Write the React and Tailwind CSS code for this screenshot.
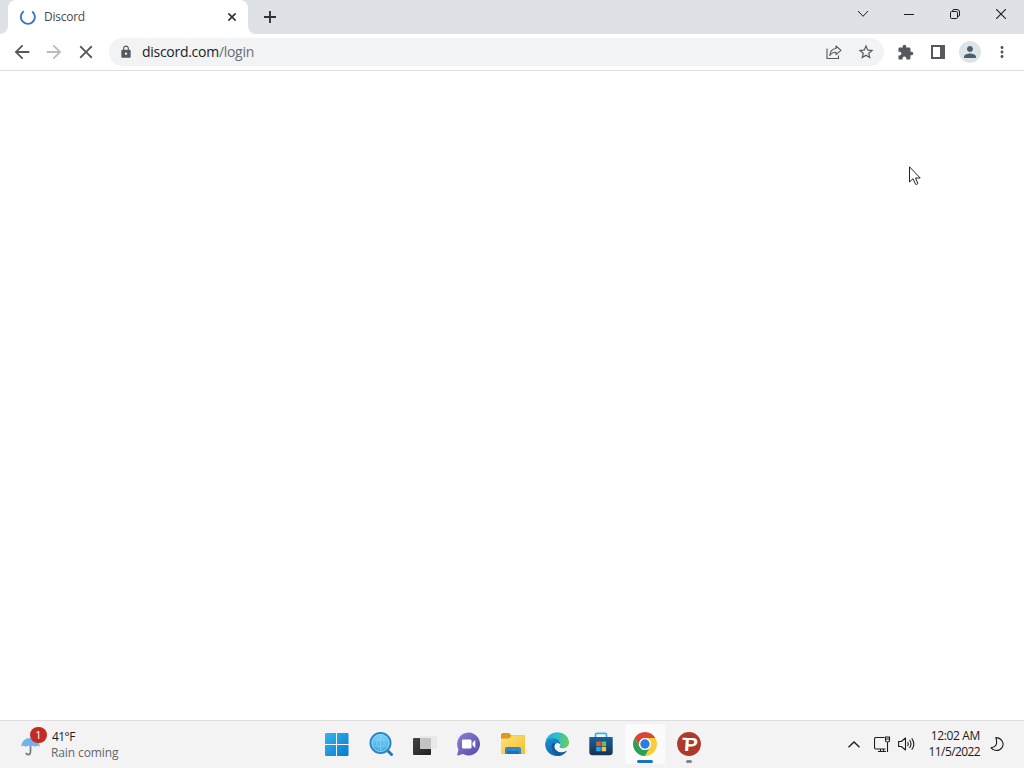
import React from "react";
import {
  MdArrowBack,
  MdArrowForward,
  MdClose,
  MdExtension,
  MdLock,
  MdMoreVert,
  MdPerson,
  MdStarBorder,
} from "react-icons/md";

const TabStrip = () => {
  return (
    <div className="flex h-[34px] bg-[#dee1e6] text-[#202124]">
      <svg width="8" height="34" viewBox="0 0 8 34" className="shrink-0">
        <path d="M8 26v8H0a8 8 0 0 0 8-8z" fill="#fff" />
      </svg>
      <div className="flex h-[34px] w-[240px] items-center rounded-t-lg bg-white pl-3 pr-3">
        <svg width="16" height="16" viewBox="0 0 16 16" fill="none">
          <path d="M3.800 2.200A7 7 0 1 0 12.200 2.400" stroke="#3b74c9" strokeWidth="1.900" />
        </svg>
        <span className="ml-2 w-[41px] whitespace-nowrap text-[12px] leading-4 tracking-[-0.25px] text-[#45494d]">
          Discord
        </span>
        <button className="ml-auto">
          <svg className="block" width="8" height="8" viewBox="0 0 8 8">
            <path d="M.4.400l7.200 7.200M7.600.400L.4 7.600" stroke="#303236" strokeWidth="1.600" />
          </svg>
        </button>
      </div>
      <svg width="8" height="34" viewBox="0 0 8 34" className="shrink-0">
        <path d="M0 26v8h8a8 8 0 0 1-8-8z" fill="#fff" />
      </svg>
      <button className="flex w-7 items-center justify-center">
        <svg width="12" height="12" viewBox="0 0 12 12">
          <path d="M6 0v12M0 6h12" stroke="#303236" strokeWidth="1.900" />
        </svg>
      </button>
      <div className="ml-auto flex h-7 text-[#1b1c1e]">
        <button className="flex w-[46px] items-center justify-center">
          <svg width="12" height="8" viewBox="0 0 12 8" fill="none">
            <path d="M1 1l5 5.300L11 1" stroke="currentColor" />
          </svg>
        </button>
        <button className="flex w-[46px] items-center justify-center pt-px">
          <svg width="10" height="1" viewBox="0 0 10 1">
            <path d="M0 0h10v1H0z" fill="currentColor" />
          </svg>
        </button>
        <button className="flex w-[46px] items-center justify-center">
          <svg width="10" height="10" viewBox="0 0 10 10" fill="none" stroke="currentColor">
            <rect x="0.5" y="2.5" width="7" height="7" rx="1.2" />
            <path d="M2.500 2V1.800Q2.700.5 4 .5h3Q9.500.5 9.500 3v3q0 1.300-1.500 1.500" />
          </svg>
        </button>
        <button className="flex w-[46px] items-center justify-center">
          <svg width="10" height="10" viewBox="0 0 10 10" fill="none">
            <path d="M0 0l10 10M10 0L0 10" stroke="currentColor" strokeWidth="1.100" />
          </svg>
        </button>
      </div>
    </div>
  );
};

const Toolbar = () => {
  return (
    <div className="flex h-[37px] items-center border-b border-[#dcdedf] bg-white pl-1.5 pr-1.5 text-[#55585c]">
      <button className="flex w-8 justify-center">
        <MdArrowBack size={22} />
      </button>
      <button className="flex w-8 justify-center text-[#b9bbbe]">
        <MdArrowForward size={22} />
      </button>
      <button className="flex w-8 justify-center">
        <MdClose size={22} />
      </button>
      <div className="ml-[7px] mr-1.5 flex h-7 grow items-center rounded-full bg-[#f1f3f4] pl-2.5 pr-0.5">
        <MdLock size={14} className="-mt-px" />
        <p className="ml-[9px] whitespace-nowrap text-[14px] leading-5 tracking-[-0.28px] text-[#6a6e73]">
          <span className="text-[#202124]">discord.com</span>/login
        </p>
        <button className="ml-auto flex w-8 justify-center">
          <svg width="16" height="16" viewBox="0 0 16 16" fill="none" stroke="currentColor" strokeWidth="1.100">
            <path d="M1 4.500v10h11.500v-3" />
            <path d="M10 2l5 4.400-5 4.200V8.200C7.300 8 5.200 9.200 3.800 11.500 4 7.500 6.200 4.900 10 4.500z" strokeLinejoin="round" />
          </svg>
        </button>
        <button className="flex w-8 justify-center">
          <MdStarBorder size={18} />
        </button>
      </div>
      <button className="flex w-8 justify-center pr-px">
        <MdExtension size={17} />
      </button>
      <button className="flex w-8 justify-center">
        <svg width="14" height="14" viewBox="0 0 14 14">
          <path d="M0 0h14v14H0zM2 2v10h7V2z" fill="currentColor" fillRule="evenodd" />
        </svg>
      </button>
      <button className="flex w-8 justify-center">
        <span className="flex h-[22px] w-[22px] items-center justify-center rounded-full bg-[#dfe4e8] text-[#4b5f6c]">
          <MdPerson size={18} />
        </span>
      </button>
      <button className="flex w-8 justify-center">
        <MdMoreVert size={18} />
      </button>
    </div>
  );
};

const Cursor = () => (
  <svg className="absolute left-[909px] top-[166px]" width="12" height="20" viewBox="0 0 12 20">
    <path
      d="M.5.800v15.200l3.500-3.300 2.600 5.600q1.200.6 2.300-.8L6.500 12h4.700z"
      fill="#fff"
      stroke="#222"
      strokeLinejoin="round"
    />
  </svg>
);

const StartIcon = () => (
  <svg width="24" height="24" viewBox="0 0 24 24">
    <defs>
      <linearGradient id="start" x1="0" y1="0" x2="1" y2="1" gradientUnits="objectBoundingBox">
        <stop stopColor="#33b5ee" />
        <stop offset="1" stopColor="#0879cf" />
      </linearGradient>
    </defs>
    <path
      d="M1 1h10v11H0V2q0-1 1-1zM12 1h10.500q1 0 1 1v10H12zM0 13h11v11H1q-1 0-1-1zM12 13h11.500v10q0 1-1 1H12z"
      fill="url(#start)"
    />
  </svg>
);

const SearchIcon = () => (
  <svg width="24" height="24" viewBox="0 0 24 24" fill="none">
    <defs>
      <linearGradient id="lens" x2="0" y2="1">
        <stop stopColor="#7fd5f7" />
        <stop offset="1" stopColor="#36a5e4" />
      </linearGradient>
    </defs>
    <path d="M18 18l4.500 4.500" stroke="#287bb5" strokeWidth="3" strokeLinecap="round" />
    <circle cx="11.500" cy="11" r="10" fill="url(#lens)" stroke="#2c86c2" strokeWidth="2" />
    <circle cx="11.500" cy="11" r="8.500" stroke="#8bdcfa" strokeWidth="1" />
    <path
      d="M5 8h13M5 14h13M11.500 4v14M11.500 4c-5 4.500-5 9.500 0 14M11.500 4c5 4.500 5 9.500 0 14"
      stroke="#86d3f5"
      strokeWidth="0.700"
    />
  </svg>
);

const TaskViewIcon = () => (
  <svg width="24" height="24" viewBox="0 0 24 24">
    <defs>
      <linearGradient id="taskview" x2="1" y2="1">
        <stop stopColor="#444" />
        <stop offset="1" stopColor="#202020" />
      </linearGradient>
    </defs>
    <rect x="0" y="6" width="18" height="17" rx="1" fill="url(#taskview)" />
    <rect x="7" y="4" width="17" height="13" rx="1" fill="#e9e9e9" />
    <path d="M7 6h11v11H8q-1 0-1-1z" fill="#c3c3c3" />
  </svg>
);

const ChatIcon = () => (
  <svg width="24" height="24" viewBox="0 0 24 24">
    <defs>
      <linearGradient id="chat" x2="1" y2="1">
        <stop stopColor="#8c82cf" />
        <stop offset="1" stopColor="#5548ad" />
      </linearGradient>
    </defs>
    <path d="M11.500.5a11.500 11.500 0 1 1-5.500 21.600L.8 23.500q-.8.1-.6-.8L1.500 17.500A11.500 11.500 0 0 1 11.500.5z" fill="url(#chat)" />
    <rect x="5" y="7.500" width="9.500" height="9" rx="1.300" fill="#fff" />
    <path d="M15.500 10.800l2.800-2.800v8l-2.800-2.800z" fill="#fff" />
  </svg>
);

const FolderIcon = () => (
  <svg width="26" height="24" viewBox="0 0 26 24">
    <defs>
      <linearGradient id="folder" x2="1" y2="1">
        <stop stopColor="#ffe27a" />
        <stop offset="1" stopColor="#f4bd29" />
      </linearGradient>
    </defs>
    <path d="M1 3q0-2 2-2h6l2.500 2.500H24q1 0 1 1V10H1z" fill="#d99b17" />
    <path d="M1 6.500h8L11.500 4H24q1 0 1 1v16q0 1-1 1H2q-1 0-1-1z" fill="url(#folder)" />
    <path d="M5 17q0-2 2-2h12q2 0 2 2v5H5z" fill="#2f86cc" />
    <path d="M7 19h12v3H7z" fill="#1d71b5" />
  </svg>
);

const EdgeIcon = () => (
  <svg width="24" height="24" viewBox="0 0 24 24">
    <defs>
      <linearGradient id="edgeTop" x1="0" y1=".3" x2="1" y2=".4">
        <stop stopColor="#2aa9df" />
        <stop offset=".5" stopColor="#2fbdc9" />
        <stop offset="1" stopColor="#68cf59" />
      </linearGradient>
      <linearGradient id="edgeLeft" x1="0" y1="0" x2=".5" y2="1">
        <stop stopColor="#1c91d2" />
        <stop offset="1" stopColor="#1464ae" />
      </linearGradient>
    </defs>
    <path d="M.3 11A11.800 11.800 0 0 1 12 .2C19 .2 24 5 24 10.300c0 4-3 6.200-6.200 6.200-2.500 0-4-.9-3.400-1.800 2.500-3-.2-6.600-4.400-6.600C5 8.100 1 10 .3 11z" fill="url(#edgeTop)" />
    <path d="M.2 11.500C1.200 7.700 5 6 8.700 6.300c4.500.3 7.200 3.800 6.400 6.700-.9-2-3.600-2.300-4.900-.5-2.300 3.300 1.300 8 6.300 7.700 2.700 0 4.400-1.300 5.300-1.500C19.500 22.200 16.200 24 12 24 5 24-.2 18.300.2 11.500z" fill="url(#edgeLeft)" />
    <path d="M8.700 10.300c-4.600 4.300-1.200 13 5.500 13.500 3.500-.4 6.300-2.600 7.600-5.100-1 .2-2.500 1.500-5.300 1.500-5 0-8.700-4.900-6.300-7.700z" fill="#145ba2" />
    <path d="M10.200 12.500c1.300-1.800 4-1.500 4.900.5.300 1.200-1.200 1.700-.7 2.300.9 1.700 5.200 1.500 8.200-.5l-.8 3.900c-1 .2-2.600 1.500-5.300 1.500-5 0-8.300-4.900-6.300-7.700z" fill="#f3f3f3" />
  </svg>
);

const StoreIcon = () => (
  <svg width="24" height="24" viewBox="0 0 24 24">
    <defs>
      <linearGradient id="store" x2="0" y2="1">
        <stop stopColor="#17639d" />
        <stop offset="1" stopColor="#183253" />
      </linearGradient>
    </defs>
    <path d="M6.500 6V3q0-1.700 1.700-1.700h7.600q1.700 0 1.700 1.700v3" fill="none" stroke="#3bb6e1" strokeWidth="1.700" />
    <path d="M1 5h22q.7 0 .7.700V20q0 3.300-3.300 3.300H3.600Q.3 23.300.3 20V5.700Q.3 5 1 5z" fill="url(#store)" />
    <path d="M7.200 9.500h4.500V14H7.200z" fill="#e65933" />
    <path d="M12.600 9.500h4.500V14h-4.500z" fill="#84b83b" />
    <path d="M7.200 14.800h4.500v4.500H7.200z" fill="#29a7df" />
    <path d="M12.600 14.800h4.500v4.500h-4.500z" fill="#f3c33a" />
  </svg>
);

const ChromeIcon = () => (
  <svg width="24" height="24" viewBox="0 0 24 24">
    <path d="M1.610 6A12 12 0 0 1 22.390 6H12a6 6 0 0 0-5.200 9z" fill="#dc4436" />
    <path d="M22.390 6A12 12 0 0 1 12 24l5.200-9A6 6 0 0 0 12 6z" fill="#fbcd35" />
    <path d="M12 24A12 12 0 0 1 1.610 6l5.190 9a6 6 0 0 0 10.400 0z" fill="#29a052" />
    <circle cx="12" cy="12" r="6" fill="#fff" />
    <circle cx="12" cy="12" r="4.700" fill="#2d7de0" />
  </svg>
);

const PsiphonIcon = () => (
  <svg width="24" height="24" viewBox="0 0 24 24">
    <circle cx="12" cy="12" r="11.900" fill="#ad392d" />
    <path d="M5.500 5.700h4v2.300h-4z" fill="#fff" />
    <text
      x="6"
      y="18.800"
      fill="#fff"
      fontSize="19"
      fontWeight="700"
      fontFamily="Liberation Sans, sans-serif"
      transform="translate(2 0) skewX(-4)"
      textLength="13.500"
      lengthAdjust="spacingAndGlyphs"
    >
      P
    </text>
  </svg>
);

const apps = [
  { name: "Start", Icon: StartIcon },
  { name: "Search", Icon: SearchIcon },
  { name: "Task View", Icon: TaskViewIcon },
  { name: "Chat", Icon: ChatIcon },
  { name: "File Explorer", Icon: FolderIcon },
  { name: "Microsoft Edge", Icon: EdgeIcon },
  { name: "Microsoft Store", Icon: StoreIcon },
  { name: "Google Chrome", Icon: ChromeIcon, active: true },
  { name: "Psiphon", Icon: PsiphonIcon, running: true },
];

const Weather = () => (
  <div className="flex w-[314px] items-center pl-5">
    <div className="relative h-[30px] w-[27px]">
      <svg className="ml-px mt-1" width="19" height="23" viewBox="0 0 20 23">
        <path d="M10 7v11q0 3-2.500 3-2 0-2-2" fill="none" stroke="#747a80" strokeWidth="1.800" />
        <path d="M0 13Q1 3.500 10 3.500T20 13q-2-2.500-5 0-2.500-2.300-5 0-2.500-2.300-5 0-3-2.500-5 0z" fill="#72b2ee" />
      </svg>
      <span className="absolute -top-[3px] left-2.5 flex h-4 w-[17px] items-center justify-center rounded-full bg-[#c42b20] text-[11px] leading-none text-white">
        1
      </span>
    </div>
    <div className="ml-[5px] text-[12px] leading-4">
      <p className="tracking-[-0.55px] text-[#202020]">41°F</p>
      <p className="-ml-px tracking-[-0.1px] text-[#666]">Rain coming</p>
    </div>
  </div>
);

const Tray = () => (
  <div className="ml-auto flex items-center pb-px text-[#1c1c1c]">
    <svg width="12" height="7" viewBox="0 0 12 7" fill="none">
      <path d="M.5 6.300L6 1l5.500 5.300" stroke="currentColor" strokeWidth="1.300" />
    </svg>
    <svg className="ml-3.5" width="17" height="17" viewBox="0 0 17 17" fill="none" stroke="currentColor" strokeWidth="1.100">
      <path d="M10.500 1.500H2q-1.500 0-1.500 1.500v8.500Q.5 13 2 13h9.500M4 15.500h8M6.500 13v2.500M9.500 13v2.500" />
      <path d="M11.500 1h4v3.500q0 1.500-2 1.500t-2-1.500zM11.500 3h4M13.500 6v10" />
    </svg>
    <svg className="ml-[7px]" width="17" height="16" viewBox="0 0 17 16" fill="none" stroke="currentColor" strokeWidth="1.100">
      <path d="M.6 5.500h2.700L7.500 2v12l-4.200-3.500H.6z" strokeLinejoin="round" />
      <path d="M9.500 6q1.600 2 0 4M11.500 4q3 4 0 8M13.700 2.300q4.300 5.700 0 11.400" />
    </svg>
    <div className="ml-3.5 whitespace-nowrap text-right text-[12px] leading-4">
      <p className="tracking-[-0.35px]">12:02 AM</p>
      <p className="tracking-[-0.6px]">11/5/2022</p>
    </div>
    <svg className="ml-2.5 mr-5" width="14" height="14" viewBox="0 0 14 14" fill="none">
      <path d="M5.800.6c6 .4 9 5.800 6.200 10C9.300 14.500 3.500 14.200 1 10.900c4.800-.6 7-4 4.800-10.300z" stroke="currentColor" strokeWidth="1.100" strokeLinejoin="round" />
    </svg>
  </div>
);

const Taskbar = () => {
  return (
    <div className="flex h-12 border-t border-[#dedede] bg-[#f3f3f3]">
      <Weather />
      <div className="flex items-center gap-1 pb-px pl-[3px]">
        {apps.map(({ name, Icon, active, running }) => (
          <button
            key={name}
            aria-label={name}
            className={`relative flex h-10 w-10 items-center justify-center rounded ${active ? "bg-[#fbfbfb]" : ""}`}
          >
            <Icon />
            {active && <span className="absolute bottom-px h-[3px] w-4 rounded-full bg-[#1976ba]" />}
            {running && <span className="absolute bottom-px h-[3px] w-1.5 rounded-full bg-[#858585]" />}
          </button>
        ))}
      </div>
      <Tray />
    </div>
  );
};

const App = () => {
  return (
    <div className="relative flex h-[768px] w-[1024px] flex-col overflow-hidden bg-white font-['Open_Sans','Noto_Sans',sans-serif]">
      <TabStrip />
      <Toolbar />
      <main className="grow bg-white" />
      <Taskbar />
      <Cursor />
    </div>
  );
};

export default App;
